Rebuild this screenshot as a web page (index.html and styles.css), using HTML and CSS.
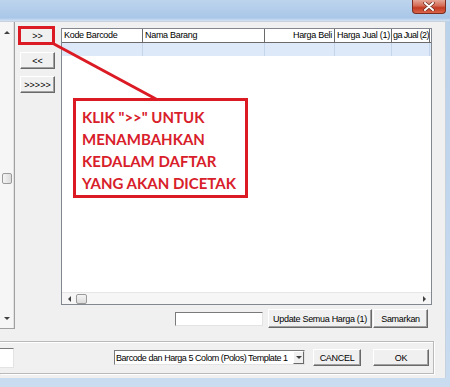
FILE: index.html
```html
<!DOCTYPE html>
<html lang="en">
  <head>
    <meta charset="UTF-8" />
    <meta name="viewport" content="width=device-width, initial-scale=1.0" />
    <title>Cetak Barcode</title>
    <link rel="stylesheet" href="styles.css">
  </head>
  <body>
    <div class="titlebar">
      <div class="close-btn">
        <svg width="12" height="9" viewBox="0 0 12 9">
          <path d="M2 1 L10 8 M10 1 L2 8" stroke="#6b2a22" stroke-width="3.4" stroke-linecap="round" />
          <path d="M2 1 L10 8 M10 1 L2 8" stroke="#ffffff" stroke-width="2" stroke-linecap="round" />
        </svg>
      </div>
    </div>

    <div class="client">
      <div class="main">
        <!-- daftar kiri (hanya scrollbar yang terlihat) -->
        <div class="side">
          <div class="vscroll">
            <div class="arrow"><span class="tri-up"></span></div>
            <div class="track"><div class="vthumb"></div></div>
            <div class="arrow"><span class="tri-down"></span></div>
          </div>
        </div>

        <div class="mover">
          <button class="move-btn add">&gt;&gt;</button>
          <button class="move-btn">&lt;&lt;</button>
          <button class="move-btn">&gt;&gt;&gt;&gt;&gt;</button>
        </div>

        <div class="grid-col">
          <div class="listview">
            <div class="lv-head">
              <div class="cell c1">Kode Barcode</div>
              <div class="cell c2">Nama Barang</div>
              <div class="cell c3 right">Harga Beli</div>
              <div class="cell c4">Harga Jual (1)</div>
              <div class="cell c5">ga Jual (2)</div>
            </div>
            <div class="lv-row">
              <div class="cell c1"></div>
              <div class="cell c2"></div>
              <div class="cell c3"></div>
              <div class="cell c4"></div>
              <div class="cell c5"></div>
            </div>
            <div class="lv-body"></div>
            <div class="hscroll">
              <div class="harrow"><span class="tri-left"></span></div>
              <div class="hthumb"></div>
              <div class="htrack"></div>
              <div class="harrow"><span class="tri-right"></span></div>
            </div>
          </div>

          <div class="actions">
            <input class="field price-field" type="text" />
            <button class="btn update-btn">Update Semua Harga (1)</button>
            <button class="btn samarkan-btn">Samarkan</button>
          </div>
        </div>
      </div>

      <div class="footer">
        <input class="field left-field" type="text" />
        <div class="combo">
          <span class="combo-text">Barcode dan Harga 5 Colom (Polos) Template 1</span>
          <span class="combo-btn"><span class="tri-down"></span></span>
        </div>
        <button class="btn cancel-btn">CANCEL</button>
        <button class="btn ok-btn">OK</button>
      </div>
    </div>

    <!-- anotasi -->
    <div class="mark"></div>
    <svg class="pointer" width="450" height="387">
      <line x1="54" y1="44" x2="156" y2="99" stroke="#dc1a24" stroke-width="3" />
    </svg>
    <div class="callout">
      KLIK "&gt;&gt;" UNTUK<br />
      MENAMBAHKAN<br />
      KEDALAM DAFTAR<br />
      YANG AKAN DICETAK
    </div>
  </body>
</html>
```

FILE: styles.css
```css
body {
  margin: 0;
  width: 450px;
  height: 387px;
  overflow: hidden;
  position: relative;
  background: linear-gradient(#b9d1ea, #c9dcf0);
  font-family: "Liberation Sans", Arial, sans-serif;
  font-size: 9px;
  letter-spacing: -0.3px;
  color: #000;
}
.titlebar {
  height: 21px;
  display: flex;
  justify-content: flex-end;
  align-items: flex-start;
  padding-right: 4px;
  box-sizing: border-box;
  background: linear-gradient(#bdd4ed, #a9c7e8 85%, #d4e3f3);
}
.close-btn {
  width: 34px;
  height: 14px;
  box-sizing: border-box;
  border: 1px solid #7b2d22;
  border-top: none;
  border-radius: 0 0 4px 4px;
  background: linear-gradient(#e6a696, #d46a55 45%, #c23a22 60%, #d9664a);
  display: flex;
  align-items: center;
  justify-content: center;
}
.client {
  width: 446px;
  height: 357px;
  box-sizing: border-box;
  background: #f0f0f0;
  border-top: 1px solid #c8d2dc;
  border-right: 1px solid #c8d2dc;
}
.main {
  display: flex;
  align-items: flex-start;
  height: 307px;
}
.side {
  width: 15px;
  height: 307px;
  box-sizing: border-box;
  border-right: 1px solid #a0a0a0;
  border-bottom: 1px solid #a0a0a0;
}
.vscroll {
  width: 13px;
  height: 100%;
  background: #f6f6f6;
  border-right: 1px solid #e2e2e2;
  display: flex;
  flex-direction: column;
}
.arrow {
  height: 20px;
  display: flex;
  align-items: center;
  justify-content: center;
}
.track {
  flex: 1;
}
.vthumb {
  margin: 131px 0 0 2px;
  width: 10px;
  height: 11px;
  box-sizing: border-box;
  border: 1px solid #9a9a9a;
  border-radius: 2px;
  background: linear-gradient(90deg, #f4f4f4, #dcdcdc);
}
.tri-up,
.tri-down,
.tri-left,
.tri-right {
  width: 0;
  height: 0;
  border: 3px solid transparent;
}
.tri-up {
  border-bottom: 3px solid #404040;
  border-top-width: 0;
}
.tri-down {
  border-top: 3px solid #404040;
  border-bottom-width: 0;
}
.tri-left {
  border-right: 3px solid #404040;
  border-left-width: 0;
}
.tri-right {
  border-left: 3px solid #404040;
  border-right-width: 0;
}
.mover {
  margin: 5px 0 0 5px;
  display: flex;
  flex-direction: column;
  gap: 7px;
}
.move-btn,
.btn {
  font-family: inherit;
  font-size: 9px;
  letter-spacing: -0.3px;
  color: #000;
  padding: 0;
  box-sizing: border-box;
  background: #f0f0f0;
  border: 1px solid;
  border-color: #ffffff #696969 #696969 #ffffff;
  box-shadow: inset -1px -1px 0 #a0a0a0;
  white-space: nowrap;
}
.move-btn {
  width: 35px;
  height: 17px;
  letter-spacing: 0;
}
.move-btn.add {
  margin-bottom: 1px;
}
.grid-col {
  margin: 6px 0 0 6px;
  display: flex;
  flex-direction: column;
}
.listview {
  width: 371px;
  height: 277px;
  box-sizing: border-box;
  border: 1px solid #828790;
  background: #fff;
  display: flex;
  flex-direction: column;
  overflow: hidden;
}
.lv-head,
.lv-row {
  display: flex;
  flex-shrink: 0;
}
.lv-head {
  height: 14px;
  box-sizing: border-box;
  border-bottom: 1px solid #6a6a6a;
}
.lv-row {
  height: 13px;
  background: #dde9f8;
}
.cell {
  box-sizing: border-box;
  white-space: nowrap;
  overflow: hidden;
  padding: 0 2px;
  line-height: 13px;
}
.lv-head .cell {
  border-right: 1px solid #6a6a6a;
}
.lv-row .cell {
  border-right: 1px solid #c6d6ea;
}
.c1 { width: 81px; }
.c2 { width: 122px; }
.c3 { width: 70px; }
.c4 { width: 57px; }
.c5 {
  width: 38px;
  padding: 0 0 0 1px;
  letter-spacing: -0.6px;
}
.right {
  text-align: right;
}
.lv-body {
  flex: 1;
}
.hscroll {
  height: 12px;
  display: flex;
  align-items: center;
  background: #f6f6f6;
  border-top: 1px solid #e6e6e6;
  box-sizing: border-box;
}
.harrow {
  width: 14px;
  height: 100%;
  display: flex;
  align-items: center;
  justify-content: center;
}
.hthumb {
  width: 11px;
  height: 10px;
  box-sizing: border-box;
  border: 1px solid #9a9a9a;
  border-radius: 2px;
  background: linear-gradient(#f4f4f4, #dcdcdc);
}
.htrack {
  flex: 1;
}
.actions {
  margin-top: 4px;
  padding-right: 4px;
  height: 19px;
  display: flex;
  align-items: center;
  justify-content: flex-end;
}
.field {
  box-sizing: border-box;
  margin: 0;
  padding: 0;
  background: #fff;
  border: 1px solid;
  border-color: #7a7a7a #e3e3e3 #e3e3e3 #7a7a7a;
}
.price-field {
  width: 88px;
  height: 14px;
  margin-right: 5px;
}
.update-btn {
  width: 104px;
  height: 19px;
  margin-right: 1px;
}
.samarkan-btn {
  width: 55px;
  height: 19px;
}
.footer {
  margin-top: 12px;
  width: 434px;
  height: 33px;
  box-sizing: border-box;
  border: 1px solid #b9b9b9;
  border-left: none;
  box-shadow: 1px 1px 0 #fff, inset 0 1px 0 #fff;
  display: flex;
  align-items: center;
  padding-right: 4px;
}
.left-field {
  width: 14px;
  height: 20px;
  border-left: none;
}
.combo {
  margin-left: auto;
  width: 191px;
  height: 15px;
  box-sizing: border-box;
  background: #fff;
  border: 1px solid;
  border-color: #7a7a7a #e3e3e3 #e3e3e3 #7a7a7a;
  display: flex;
  align-items: center;
}
.combo-text {
  flex: 1;
  padding-left: 1px;
  letter-spacing: -0.45px;
  white-space: nowrap;
  overflow: hidden;
}
.combo-btn {
  width: 11px;
  height: 13px;
  box-sizing: border-box;
  background: #f0f0f0;
  border: 1px solid;
  border-color: #fff #696969 #696969 #fff;
  display: flex;
  align-items: center;
  justify-content: center;
}
.cancel-btn {
  margin-left: 8px;
  width: 48px;
  height: 17px;
}
.ok-btn {
  margin-left: 12px;
  width: 56px;
  height: 17px;
}
.mark {
  position: absolute;
  left: 18px;
  top: 26px;
  width: 37px;
  height: 19px;
  box-sizing: border-box;
  border: 3px solid #dc1a24;
}
.pointer {
  position: absolute;
  left: 0;
  top: 0;
}
.callout {
  position: absolute;
  left: 73px;
  top: 98px;
  width: 175px;
  height: 100px;
  box-sizing: border-box;
  border: 3px solid #dc1a24;
  background: #fff;
  padding: 5px 0 0 6px;
  font-family: Lato, "Open Sans", sans-serif;
  font-weight: bold;
  font-size: 15px;
  line-height: 22px;
  letter-spacing: 0;
  color: #d8202a;
}
```
